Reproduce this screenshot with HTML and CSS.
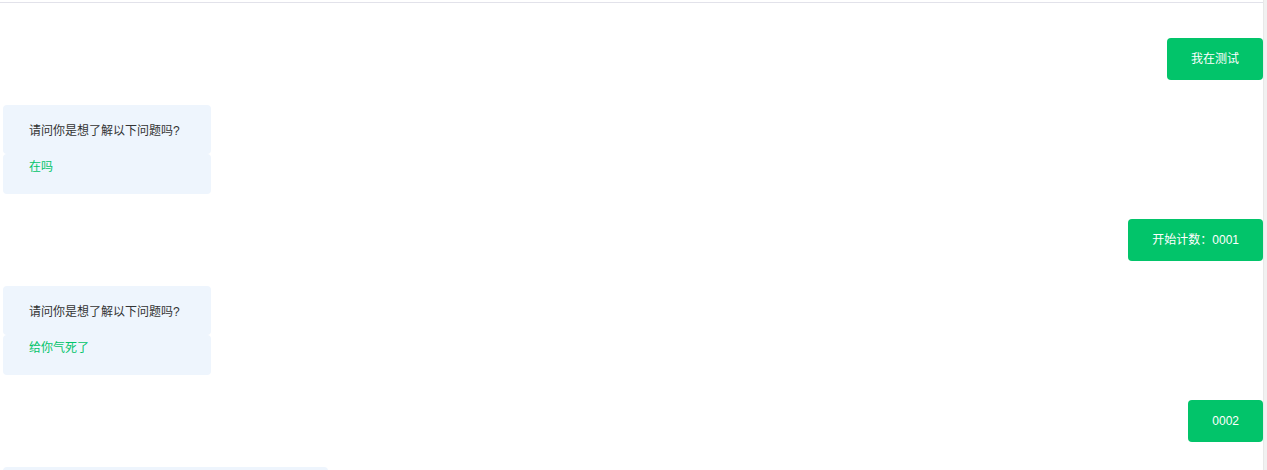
FILE: index.html
```html
<!DOCTYPE html>
<html lang="zh-CN">
<head>
<meta charset="utf-8">
<title>chat</title>
<link rel="stylesheet" href="styles.css">
</head>
<body>
<div class="page">
  <div class="chat">
    <div class="topline"></div>
    <div class="messages">
      <div class="msg msg-right"><div class="bubble-me">我在测试</div></div>
      <div class="msg msg-left">
        <div class="bubble-bot">
          <div class="bot-q">请问你是想了解以下问题吗?</div>
          <div class="bot-a">在吗</div>
        </div>
      </div>
      <div class="msg msg-right"><div class="bubble-me">开始计数：0001</div></div>
      <div class="msg msg-left">
        <div class="bubble-bot">
          <div class="bot-q">请问你是想了解以下问题吗?</div>
          <div class="bot-a">给你气死了</div>
        </div>
      </div>
      <div class="msg msg-right"><div class="bubble-me">0002</div></div>
      <div class="msg msg-left"><div class="bubble-wide"></div></div>
    </div>
  </div>
  <div class="scrolltrack"></div>
</div>
</body>
</html>
```
FILE: styles.css
```css
html, body {
  margin: 0;
  padding: 0;
  background: #ffffff;
}
body {
  font-family: "Liberation Sans", "Noto Sans CJK SC", sans-serif;
  font-size: 12px;
  color: #333333;
}
.page {
  display: flex;
  width: 1267px;
  height: 470px;
  overflow: hidden;
}
.chat {
  flex: 1;
  padding-top: 2px;
  display: flex;
  flex-direction: column;
}
.topline {
  height: 1px;
  flex-shrink: 0;
  background: #e2e2ea;
}
.messages {
  display: flex;
  flex-direction: column;
  gap: 25px;
  padding-top: 35px;
}
.msg {
  display: flex;
}
.msg-right {
  justify-content: flex-end;
}
.msg-left {
  justify-content: flex-start;
  padding-left: 3px;
}
.bubble-me {
  background: #02c46a;
  color: #ffffff;
  border-radius: 4px;
  padding: 12px 24px;
  line-height: 18px;
  white-space: nowrap;
}
.bubble-bot {
  width: 208px;
  display: flex;
  flex-direction: column;
}
.bot-q, .bot-a {
  background: #eef5fd;
  border-radius: 4px;
  line-height: 18px;
  padding-left: 26px;
}
.bot-q {
  padding-top: 17px;
  padding-bottom: 14px;
  color: #333333;
}
.bot-a {
  padding-top: 4px;
  padding-bottom: 18px;
  color: #02c46a;
}
.bubble-wide {
  width: 325px;
  height: 40px;
  background: #eef5fd;
  border-radius: 4px;
}
.scrolltrack {
  width: 3px;
  flex-shrink: 0;
  background: #f1f1f1;
  border-left: 1px solid #e8e8e8;
}
```
